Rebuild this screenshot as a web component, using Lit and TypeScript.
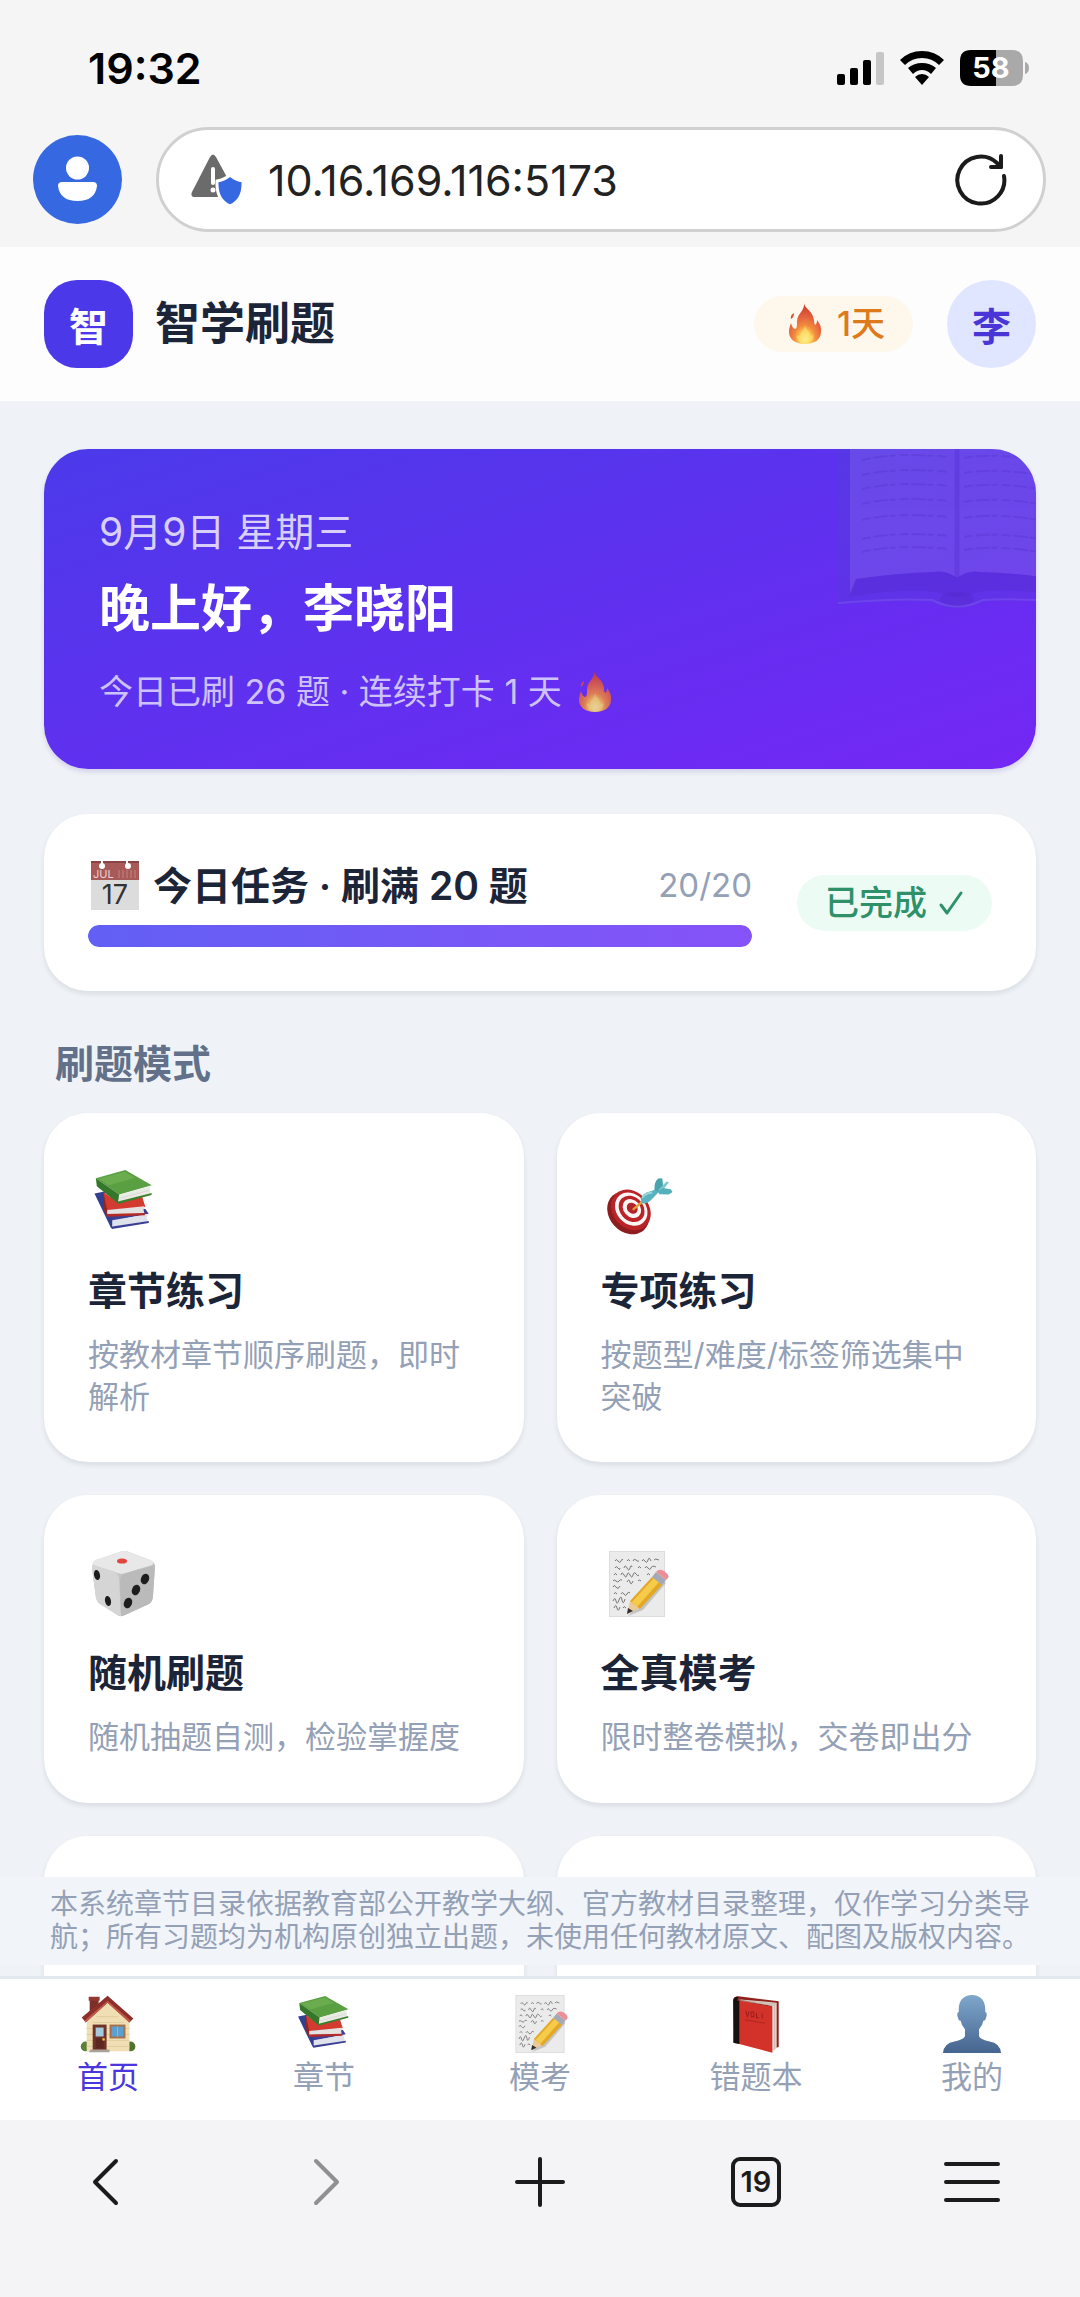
import { LitElement, html, css, svg, TemplateResult } from "lit";
import { customElement, property, state } from "lit/decorators.js";

interface Mode {
  icon: string;
  title: string;
  desc: string;
}

interface Tab {
  id: string;
  icon: string;
  label: string;
}

const books = svg`
  <g transform="translate(-9.6 -19) scale(.335)">
    <path d="M48 130 L78 124 L104 204 L102 236 L97 232 Z" fill="#33408f" />
    <path d="M78 160 L200 176 L210 190 L102 212 Z" fill="#3c3f94" />
    <path d="M101 210 L206 192 Q202 203 207 213 L101 229 Z" fill="#dfe2ea" />
    <path d="M101 228 L210 212 L210 218 L100 236 Z" fill="#3a3f96" />
    <path d="M74 125 L118 156 L190 138 L200 170 L84 180 Z" fill="#d33a30" />
    <path d="M74 125 L86 180 L84 196 L76 178 Z" fill="#96251f" />
    <path d="M86 179 L197 168 Q192 179 197 190 L86 193 Z" fill="#e4e1e1" />
    <path d="M84 191 L198 188 L198 195 L85 199 Z" fill="#b52a26" />
    <path d="M52 84 L140 60 L219 105 L122 133 Z" fill="#5a9f41" />
    <path d="M60 86 L138 65 L170 83 L90 106 Z" fill="#79b95c" opacity=".5" />
    <path d="M52 84 L122 133 L118 160 L55 108 Z" fill="#35772a" />
    <path d="M121 134 L215 108 Q210 119 215 130 L121 156 Z" fill="#e9ebe5" />
    <path d="M122 145 L212 120" stroke="#cfd4ca" stroke-width="2" />
    <path d="M118 154 L219 128 L218 134 L118 161 Z" fill="#3b7f2e" />
  </g>
`;

const target = svg`
  <g transform="translate(-9.4 -18.4) scale(.333)">
    <ellipse cx="110" cy="187" rx="57" ry="70" transform="rotate(-42 110 187)" fill="#8e1d20" />
    <ellipse cx="118" cy="178" rx="54" ry="66" transform="rotate(-42 118 178)" fill="#b92429" />
    <ellipse cx="119" cy="176" rx="44" ry="54" transform="rotate(-42 119 176)" fill="#fbf5f3" />
    <ellipse cx="120" cy="175" rx="35" ry="43" transform="rotate(-42 120 175)" fill="#b92429" />
    <ellipse cx="121" cy="174" rx="25" ry="31" transform="rotate(-42 121 174)" fill="#fbf5f3" />
    <ellipse cx="122" cy="173" rx="15" ry="18" transform="rotate(-42 122 173)" fill="#b3232a" />
    <path d="M126 176 L152 154" stroke="#d9a53a" stroke-width="7" stroke-linecap="round" />
    <path d="M148 148 Q150 126 180 121 L201 112 L204 122 L184 143 Q166 162 152 158 Z" fill="#5bb3bd" />
    <path d="M152 142 Q160 128 182 126" stroke="#9edbe0" stroke-width="5" fill="none" />
    <path d="M189 118 Q187 94 200 84 L212 83 L215 106 L200 122 Z" fill="#49a3ae" />
    <path d="M200 118 L226 92 L232 96 L214 118 Z" fill="#7cc9d0" />
    <path d="M198 122 L214 112 L238 116 L243 124 L232 132 L204 131 Z" fill="#54b0ba" />
  </g>
`;

const dice = svg`
  <g transform="translate(3 0)">
    <path d="M2 12 Q3 9 8 8 L29 1 Q33 -1 38 1 L59 9 Q64 11 64 15 L62 45 Q62 50 58 53 L34 64 Q29 67 25 63 L9 53 Q6 51 5 47 L1 17 Z" fill="#c6c6c6" />
    <path d="M2 12 Q3 9 8 8 L29 1 Q33 -1 38 1 L59 9 Q65 11 61 14 L35 22 Q29 24 24 21 L5 15 Q1 14 2 12 Z" fill="#e8e8e8" />
    <path d="M2 14 L24 21 Q28 24 28 29 L30 65 Q27 65 25 63 L9 53 Q6 51 5 47 L1 17 Z" fill="#d5d5d5" />
    <path d="M64 14 L35 22 Q29 24 29 30 L30 65 Q32 65 34 64 L58 53 Q62 50 62 45 Z" fill="#bababa" />
    <ellipse cx="31" cy="10" rx="5" ry="2.600" fill="#e2453c" />
    <ellipse cx="6" cy="24" rx="3" ry="5" transform="rotate(-12 6 24)" fill="#1d1d1d" />
    <ellipse cx="17" cy="50" rx="3" ry="5" transform="rotate(-12 17 50)" fill="#1d1d1d" />
    <ellipse cx="54" cy="28" rx="4" ry="5.500" transform="rotate(22 54 28)" fill="#1d1d1d" />
    <ellipse cx="45" cy="39" rx="4" ry="5.500" transform="rotate(22 45 39)" fill="#1d1d1d" />
    <ellipse cx="37" cy="52" rx="4" ry="5.500" transform="rotate(22 37 52)" fill="#1d1d1d" />
  </g>
`;

const memo = svg`
  <g transform="translate(7 0)">
    <rect x="1" y="0" width="56" height="66" fill="#dcdcdc" />
    <rect x="2" y="1" width="54" height="64" fill="#ebebeb" />
    <g fill="none" stroke="#6a6a6a" stroke-width=".9">
      <path d="M7 10 q1 -3 3 0 t3 0 t2 -1 M19 10 q1 -3 3 0 M25 10 q1 -3 3 -1 t3 1 M34 10 q1 -3 3 0 t3 -1 t3 1 M46 9 q1 -2 5 0" />
      <path d="M7 17 q1 -3 3 0 t2 0 M16 17 q1 -4 3 0 t3 0 t2 -1 M30 17 q1 -3 3 0 M37 17 q1 -3 3 0 t3 0 t5 -1" />
      <path d="M6 24 q1 -3 3 0 M13 24 q1 -4 3 0 t3 0 t3 0 t3 0 t3 -1 t3 1 M39 24 q1 -3 3 0" />
      <path d="M5 30 q1 -2 3 0 t3 0 t3 -1 M19 31 q2 -4 3 0 t3 -1 M30 30 q1 -2 3 0" />
      <path d="M5 36 q1 -3 3 0 t4 -1" />
      <path d="M6 43 q1 -3 3 0 M13 43 q1 -3 3 0 t3 0 t3 -1" />
      <path d="M5 50 q2 -5 3 0 t3 -1 t3 0 t3 -1" />
      <path d="M6 57 q2 -5 3 0 t3 -1 M15 57 q1 -3 3 0" />
    </g>
    <path d="M20 65 L35 59 L58 32 L54 28 Z" fill="#8a8a8a" opacity=".4" />
    <path d="M19 63 L22 50 L32 57 Z" fill="#ecc998" />
    <path d="M19 63 L20 57 L25 60 Z" fill="#33302e" />
    <path d="M22 50 L44 26 L54 34 L32 58 Z" fill="#e3a827" />
    <path d="M24 51 L46 27 L51 31 L29 56 Z" fill="#f6cb4a" />
    <path d="M44 26 L48 21 L58 29 L54 34 Z" fill="#a4a9b5" />
    <path d="M48 21 Q51 17 56 20 Q62 24 60 27 L58 29 Z" fill="#eb9097" />
  </g>
`;

const house = svg`
  <g transform="translate(5 2) scale(1.13)">
    <path d="M9 1 H18 V14 L9 20 Z" fill="#7c3029" />
    <path d="M8 0 H19 V4 H8 Z" fill="#93382f" />
    <ellipse cx="5" cy="50" rx="5" ry="5" fill="#5b7f36" />
    <ellipse cx="50" cy="50" rx="5" ry="5" fill="#4f7430" />
    <path d="M6 24 L27 4 L49 24 V55 H6 Z" fill="#f0dfb4" />
    <path d="M6 32 H49 M6 38 H49 M6 44 H49 M6 50 H49 M16 20 H38 M12 26 H43" stroke="#e2cd9d" stroke-width="1" />
    <path d="M27 -1 L53 22 L49 26 L27 6 L5 26 L1 21 Z" fill="#8d2f2b" />
    <path d="M27 4 L50 24 L49 26 L27 6 L5 26 L4 24 Z" fill="#c25a4c" />
    <rect x="12" y="28" width="14" height="26" fill="#70332a" />
    <rect x="15" y="31" width="8" height="9" fill="#a5c9dd" />
    <rect x="15" y="42" width="8" height="10" fill="#5d271f" />
    <circle cx="23" cy="43" r="1.4" fill="#e5b444" />
    <rect x="29" y="28" width="16" height="14" fill="#a5704b" />
    <rect x="31" y="30" width="12" height="10" fill="#5ba0cf" />
    <path d="M37 30 V40" stroke="#82bce0" stroke-width="1" />
    <path d="M10 53 H29 V56 H8 Z" fill="#a9a298" />
  </g>
`;

const redBook = svg`
  <g transform="translate(-50 -16.6) scale(.383)">
    <path d="M157 58 Q158 47 172 47 L292 62 V198 L276 202 L160 186 Z" fill="#8f211d" />
    <path d="M170 56 L286 66 V200 L272 213 V76 Z" fill="#e3d7cc" />
    <path d="M176 59 L284 70 M180 62 L278 74" stroke="#b9aaa0" stroke-width="2" />
    <path d="M280 72 V206" stroke="#bcaea4" stroke-width="2" />
    <path d="M172 60 L273 78 V215 L172 188 Z" fill="#d3322a" />
    <path d="M157 58 Q160 48 172 49 L168 60 L175 61 V189 L157 185 Z" fill="#17110f" />
    <path d="M194 90 l5 18 l5 -16 M210 94 h8 v14 h-8 Z M226 96 v15 h7 M243 98 v15" stroke="#9b1f1b" stroke-width="3" fill="none" />
    <path d="M191 117 L251 127" stroke="#9b1f1b" stroke-width="2" />
  </g>
`;

const bust = svg`
  <defs>
    <linearGradient id="bust" x1="0" y1="0" x2="0" y2="1">
      <stop offset="0" stop-color="#7fa7cb" />
      <stop offset="1" stop-color="#45648f" />
    </linearGradient>
  </defs>
  <path
    d="M36 0 C46 0 52 7 51 19 Q54 20 52 26 Q51 30 49 29 Q48 35 44 39 V47 Q46 51 56 53 Q68 55 69 66 H3 Q4 55 16 53 Q26 51 28 47 V39 Q24 35 23 29 Q21 30 20 26 Q18 20 21 19 C20 7 26 0 36 0 Z"
    fill="url(#bust)"
  />
`;

const pictures: Record<string, TemplateResult> = {
  books,
  target,
  dice,
  memo,
  house,
  redBook,
  bust,
};

const picture = (name: string) => html`
  <svg class="picture" viewBox="0 0 72 66" aria-hidden="true">
    ${pictures[name]}
  </svg>
`;

const flame = html`
  <svg class="flame" viewBox="0 0 34 42" aria-hidden="true">
    <defs>
      <radialGradient id="flame" cx=".5" cy=".88" r=".8">
        <stop offset="0" stop-color="#fff6a6" />
        <stop offset=".2" stop-color="#fdd558" />
        <stop offset=".42" stop-color="#f28c3c" />
        <stop offset=".7" stop-color="#e2603f" />
        <stop offset="1" stop-color="#cf4030" />
      </radialGradient>
    </defs>
    <path
      d="M16 0 C16 5 25 8 26 17 Q26 20 27 22 Q29 21 29 17 Q34 23 33 29 C33 36 27 41 17 41 C7 41 1 36 1 29 C1 25 2 23 3 20 Q4 25 7 26 C9 26 9 22 9 19 C9 10 17 8 16 0 Z"
      fill="url(#flame)"
    />
    <path d="M3 16 Q2 12 6 10 Q6 14 3 16 Z" fill="#d8502f" />
    <path
      d="M17 21 C17 26 22 28 23 33 Q25 33 25 31 C27 37 22 40 17 40 C12 40 8 37 9 32 Q10 33 12 33 C13 28 17 27 17 21 Z"
      fill="#ffe676"
      opacity=".5"
    />
  </svg>
`;

const calendar = html`
  <svg class="calendar" viewBox="0 0 48 49" aria-hidden="true">
    <rect width="48" height="49" fill="#dcdcdc" />
    <rect width="48" height="19" fill="#a85a59" />
    <path d="M0 1 H48" stroke="#8a4445" stroke-width="2" />
    <circle cx="11" cy="5" r="3" fill="#fff" />
    <circle cx="37" cy="5" r="3" fill="#fff" />
    <path d="M11 0 V4 M36 0 V4" stroke="#fff" stroke-width="2" />
    <path d="M28 9 V17 M32 9 V17 M36 9 V17 M40 9 V17 M44 9 V17" stroke="#c48382" stroke-width="1" />
    <text x="2" y="17" font-size="11" fill="#ecd0cf">JUL</text>
    <text x="24" y="43" font-size="27" text-anchor="middle" fill="#333">17</text>
  </svg>
`;

const openBook = html`
  <svg class="open-book" viewBox="0 0 236 160" aria-hidden="true">
    <path d="M0 0 H236 V154 Q180 150 145 153 Q119 166 94 153 Q60 150 0 156 Z" fill="#4a4ac8" opacity=".22" />
    <path d="M0 154 Q60 149 94 151 Q119 164 145 151 Q180 149 236 153" fill="none" stroke="#a88cff" stroke-width="2" opacity=".2" />
    <path d="M12 0 H119 V129 Q108 121 96 123 Q60 124 18 130 L12 146 Z" fill="#cdbcff" opacity=".14" />
    <path d="M226 0 H119 V129 Q130 121 142 123 Q178 124 220 130 L226 146 Z" fill="#cdbcff" opacity=".14" />
    <path d="M18 130 Q60 124 96 123 Q108 121 119 129 Q130 121 142 123 Q178 124 220 130 L228 146 Q170 139 140 143 Q119 152 98 143 Q60 139 10 148 Z" fill="#4a22b8" opacity=".18" />
    <path d="M119 0 V129" stroke="#4a22c8" stroke-width="5" opacity=".25" />
    <ellipse cx="119" cy="150" rx="17" ry="7" fill="#4a22b8" opacity=".25" />
    <g fill="none" stroke="#4620b8" stroke-width="2" stroke-dasharray="9 3 14 2 6 4" opacity=".2">
      ${[9, 24, 38, 53, 69, 88, 101].map(
        (y) => svg`
          <path d="M24 ${y + 2} Q60 ${y - 6} 110 ${y - 1}" />
          <path d="M126 ${y} Q160 ${y - 6} 214 ${y + 4}" />
        `
      )}
    </g>
  </svg>
`;

@customElement("study-mode-card")
export class StudyModeCard extends LitElement {
  @property({ type: Object }) mode?: Mode;

  static styles = css`
    :host {
      display: grid;
    }
    button {
      display: flex;
      flex-direction: column;
      min-height: 308px;
      padding: 44px;
      border: 0;
      border-radius: 44px;
      background: #fff;
      box-shadow: 0 3px 5px rgba(30, 41, 59, 0.1);
      font: inherit;
      text-align: left;
    }
    .picture {
      width: 72px;
      height: 66px;
      margin: 12px 0 28px;
    }
    .title {
      color: #1c2537;
      font-size: 39px;
      font-weight: 600;
      line-height: 55px;
    }
    .desc {
      margin-top: 16px;
      color: #94a0b5;
      font-size: 31px;
      line-height: 42px;
    }
  `;

  render() {
    if (!this.mode) return html`<button aria-label="更多"></button>`;
    return html`
      <button>
        ${picture(this.mode.icon)}
        <span class="title">${this.mode.title}</span>
        <span class="desc">${this.mode.desc}</span>
      </button>
    `;
  }
}

@customElement("app-root")
export class AppRoot extends LitElement {
  @state() private activeTab = "home";
  @state() private done = 20;

  private goal = 20;

  private modes: Mode[] = [
    { icon: "books", title: "章节练习", desc: "按教材章节顺序刷题，即时解析" },
    { icon: "target", title: "专项练习", desc: "按题型/难度/标签筛选集中突破" },
    { icon: "dice", title: "随机刷题", desc: "随机抽题自测，检验掌握度" },
    { icon: "memo", title: "全真模考", desc: "限时整卷模拟，交卷即出分" },
  ];

  private tabs: Tab[] = [
    { id: "home", icon: "house", label: "首页" },
    { id: "chapter", icon: "books", label: "章节" },
    { id: "exam", icon: "memo", label: "模考" },
    { id: "wrong", icon: "redBook", label: "错题本" },
    { id: "mine", icon: "bust", label: "我的" },
  ];

  static styles = css`
    * {
      box-sizing: border-box;
    }
    :host {
      display: flex;
      flex-direction: column;
      height: 100vh;
      background: #eff3f7;
      color: #1c2537;
      font-family: Inter, "Noto Sans CJK SC", sans-serif;
    }
    button {
      padding: 0;
      border: 0;
      background: none;
      color: inherit;
      font: inherit;
    }
    h1,
    h2,
    p {
      margin: 0;
    }

    /* phone status bar */
    .status {
      display: flex;
      align-items: center;
      justify-content: space-between;
      padding: 40px 51px 0 88px;
      background: #f5f5f5;
      color: #000;
      font-size: 43px;
      font-weight: 600;
      line-height: 56px;
    }
    .signals {
      display: flex;
      align-items: center;
      gap: 16px;
    }
    .bars {
      width: 47px;
      height: 33px;
    }
    .wifi {
      width: 44px;
      height: 34px;
    }
    .battery {
      width: 69px;
      height: 36px;
    }

    /* browser address row */
    .browser {
      display: flex;
      align-items: center;
      gap: 34px;
      padding: 31px 34px 15px 33px;
      background: #f5f5f5;
    }
    .profile {
      flex: none;
      width: 89px;
      height: 89px;
    }
    .profile svg,
    .reload svg,
    .toolbar svg {
      display: block;
      width: 100%;
      height: 100%;
    }
    .address {
      flex: 1;
      display: flex;
      align-items: center;
      gap: 25px;
      min-width: 0;
      height: 105px;
      padding: 0 34px 0 32px;
      border: 3px solid #d0d0d0;
      border-radius: 53px;
      background: #fff;
    }
    .warning {
      flex: none;
      width: 52px;
      height: 52px;
    }
    .address input {
      flex: 1;
      min-width: 0;
      padding: 0;
      border: 0;
      outline: 0;
      background: none;
      color: #222;
      font: inherit;
      font-size: 43px;
    }
    .reload {
      flex: none;
      width: 56px;
      height: 56px;
    }

    /* app header */
    header {
      display: flex;
      align-items: center;
      padding: 33px 44px;
      background: #fdfdfe;
    }
    .logo,
    .avatar {
      display: grid;
      place-items: center;
      width: 89px;
      height: 88px;
      font-size: 39px;
      font-weight: 600;
    }
    .logo {
      border-radius: 33px;
      background: #4b39e9;
      color: #fff;
    }
    header h1 {
      flex: 1;
      margin-left: 22px;
      font-size: 45px;
      font-weight: 600;
      line-height: 66px;
    }
    .streak,
    .finished {
      display: flex;
      align-items: center;
      border-radius: 28px;
      font-size: 34px;
      font-weight: 500;
      line-height: 56px;
    }
    .streak {
      gap: 15px;
      margin-right: 34px;
      padding: 0 28px 0 34px;
      background: #fef7ec;
      color: #dc7a1c;
    }
    .flame {
      width: 34px;
      height: 42px;
    }
    .avatar {
      border-radius: 50%;
      background: #e0e6ff;
      color: #4a35d6;
    }

    /* scrolling content with the notice laid over it */
    .viewport {
      position: relative;
      flex: 1;
      min-height: 0;
    }
    main {
      height: 100%;
      padding: 48px 44px;
      overflow: auto;
      scrollbar-width: none;
    }
    .hero {
      position: relative;
      overflow: hidden;
      padding: 55px;
      border-radius: 44px;
      background: linear-gradient(to bottom right, #4b3aea, #7427f4);
      box-shadow: 0 3px 5px rgba(60, 30, 160, 0.15);
      color: #fff;
    }
    .hero .date {
      color: #d8d0fb;
      font-size: 39px;
      line-height: 55px;
    }
    .hero h2 {
      margin: 11px 0 23px;
      font-size: 51px;
      font-weight: 600;
      line-height: 77px;
    }
    .hero .summary {
      display: flex;
      align-items: center;
      gap: 16px;
      color: #cec2fa;
      font-size: 34px;
      line-height: 44px;
    }
    .hero .flame {
      opacity: 0.85;
    }
    .open-book {
      position: absolute;
      top: 0;
      right: -38px;
      width: 236px;
      height: 160px;
    }

    .task {
      display: flex;
      align-items: center;
      gap: 45px;
      margin-top: 45px;
      padding: 44px;
      border-radius: 44px;
      background: #fff;
      box-shadow: 0 3px 5px rgba(30, 41, 59, 0.1);
    }
    .task-body {
      flex: 1;
    }
    .task-line {
      display: flex;
      align-items: center;
      line-height: 55px;
    }
    .calendar {
      width: 48px;
      height: 49px;
      margin: 0 14px 0 3px;
      overflow: visible;
    }
    .task h2 {
      flex: 1;
      font-size: 39px;
      font-weight: 600;
    }
    .count {
      color: #94a0b5;
      font-size: 33px;
    }
    .track {
      height: 22px;
      margin-top: 12px;
      overflow: hidden;
      border-radius: 11px;
      background: #eef1f6;
    }
    .fill {
      height: 100%;
      border-radius: 11px;
      background: linear-gradient(90deg, #625ff5, #8653f8);
    }
    .finished {
      gap: 11px;
      padding: 0 28px;
      background: #ecfcf5;
      color: #2f9169;
    }
    .finished svg {
      width: 26px;
      height: 26px;
    }

    .section {
      margin: 45px 11px 22px;
      color: #62708a;
      font-size: 39px;
      font-weight: 600;
      line-height: 55px;
    }
    .modes {
      display: grid;
      grid-template-columns: 1fr 1fr;
      gap: 33px;
    }
    .notice {
      position: absolute;
      right: 0;
      bottom: 11px;
      left: 0;
      padding: 11px 44px;
      background: #f1f4f9;
      color: #94a0b5;
      font-size: 28px;
      line-height: 33px;
      text-align: center;
    }

    .tabs {
      display: grid;
      grid-template-columns: repeat(5, 1fr);
      padding: 16px 0 22px;
      border-top: 3px solid #e3e7ee;
      background: #fff;
    }
    .tabs a {
      display: flex;
      flex-direction: column;
      align-items: center;
      gap: 3px;
      color: #94a0b5;
      font-size: 31px;
      line-height: 42px;
      text-decoration: none;
    }
    .tabs a[aria-current="page"] {
      color: #4b35dc;
    }
    .tabs .picture {
      width: 64px;
      height: 58px;
    }

    .toolbar {
      display: grid;
      grid-template-columns: repeat(5, 1fr);
      justify-items: center;
      padding: 32px 0 85px;
      background: #f4f4f6;
      color: #1b1b1b;
    }
    .toolbar button {
      width: 60px;
      height: 60px;
    }
    .toolbar button:disabled {
      color: #909090;
    }
  `;

  render() {
    return html`
      ${this.renderStatus()} ${this.renderBrowser()}
      <header>
        <span class="logo">智</span>
        <h1>智学刷题</h1>
        <span class="streak">${flame}1天</span>
        <button class="avatar">李</button>
      </header>
      <div class="viewport">
        <main>
          <section class="hero">
            ${openBook}
            <p class="date">9月9日 星期三</p>
            <h2>晚上好，李晓阳</h2>
            <p class="summary">今日已刷 26 题 · 连续打卡 1 天 ${flame}</p>
          </section>
          ${this.renderTask()}
          <h2 class="section">刷题模式</h2>
          <div class="modes">
            ${this.modes.map(
              (mode) => html`<study-mode-card .mode="${mode}"></study-mode-card>`
            )}
            <study-mode-card></study-mode-card>
            <study-mode-card></study-mode-card>
          </div>
        </main>
        <p class="notice">
          本系统章节目录依据教育部公开教学大纲、官方教材目录整理，仅作学习分类导航；所有习题均为机构原创独立出题，未使用任何教材原文、配图及版权内容。
        </p>
      </div>
      <nav class="tabs">
        ${this.tabs.map(
          (tab) => html`
            <a
              href="#${tab.id}"
              aria-current="${tab.id === this.activeTab ? "page" : "false"}"
              @click="${() => this.selectTab(tab.id)}"
            >
              ${picture(tab.icon)}<span>${tab.label}</span>
            </a>
          `
        )}
      </nav>
      ${this.renderToolbar()}
    `;
  }

  private selectTab(id: string) {
    this.activeTab = id;
  }

  private renderStatus() {
    return html`
      <div class="status">
        <span>19:32</span>
        <div class="signals">
          <svg class="bars" viewBox="0 0 47 33">
            <rect x="0" y="22" width="8" height="11" rx="2" />
            <rect x="13" y="16" width="8" height="17" rx="2" />
            <rect x="26" y="8" width="8" height="25" rx="2" />
            <rect x="39" y="0" width="8" height="33" rx="2" fill="#c6c6c6" />
          </svg>
          <svg class="wifi" viewBox="0 0 44 34">
            <path d="M22 0 Q35 0 44 9 L39 14 Q32 7 22 7 Q12 7 5 14 L0 9 Q9 0 22 0 Z" />
            <path d="M22 12 Q30 12 36 17 L31 23 Q27 19 22 19 Q17 19 13 23 L8 17 Q14 12 22 12 Z" />
            <path d="M22 23 Q26 23 29 26 L22 34 L15 26 Q18 23 22 23 Z" />
          </svg>
          <svg class="battery" viewBox="0 0 69 36">
            <path d="M11 0 H36 V36 H11 Q0 36 0 25 V11 Q0 0 11 0 Z" />
            <path d="M36 0 H52 Q63 0 63 11 V25 Q63 36 52 36 H36 Z" fill="#a9a9a9" />
            <path d="M65 12 Q69 13 69 18 Q69 23 65 24 Z" fill="#a9a9a9" />
            <text x="31" y="28" font-size="29" font-weight="700" text-anchor="middle" fill="#fff">58</text>
          </svg>
        </div>
      </div>
    `;
  }

  private renderBrowser() {
    return html`
      <div class="browser">
        <button class="profile" aria-label="账户">
          <svg viewBox="0 0 89 89">
            <circle cx="44.5" cy="44.5" r="44.5" fill="#3668e2" />
            <circle cx="44.5" cy="33" r="11.5" fill="#fff" />
            <path d="M29 47 H60 Q64 47 64 51 Q62 66 44.5 66 Q27 66 25 51 Q25 47 29 47 Z" fill="#fff" />
          </svg>
        </button>
        <div class="address">
          <svg class="warning" viewBox="0 0 52 52">
            <path d="M19 3 Q22 -2 25 3 L44 38 Q46 43 41 43 H4 Q-1 43 1 38 Z" fill="#6b6b6b" />
            <path d="M22 15 V29" stroke="#fff" stroke-width="4" stroke-linecap="round" />
            <circle cx="22" cy="36" r="2.5" fill="#fff" />
            <path d="M39 21 Q45 26 52 27 Q53 46 39 52 Q25 46 26 27 Q33 26 39 21 Z" fill="#3668e2" stroke="#fff" stroke-width="3" />
          </svg>
          <input aria-label="网址" value="10.16.169.116:5173" />
          <button class="reload" aria-label="刷新">
            <svg viewBox="0 0 56 56" fill="none" stroke="#1b1b1b" stroke-width="4" stroke-linecap="round" stroke-linejoin="round">
              <path d="M51 24 A23.500 23.500 0 1 1 44 11 L48 15" />
              <path d="M48 4 V15 H38" />
            </svg>
          </button>
        </div>
      </div>
    `;
  }

  private renderTask() {
    const percent = Math.min(100, (this.done / this.goal) * 100);
    return html`
      <section class="task">
        <div class="task-body">
          <div class="task-line">
            ${calendar}
            <h2>今日任务 · 刷满 ${this.goal} 题</h2>
            <span class="count">${this.done}/${this.goal}</span>
          </div>
          <div class="track" role="progressbar" aria-valuenow="${percent}">
            <div class="fill" style="width: ${percent}%"></div>
          </div>
        </div>
        <span class="finished">
          已完成
          <svg viewBox="0 0 26 26" fill="none" stroke="currentColor" stroke-width="3" stroke-linecap="round" stroke-linejoin="round">
            <path d="M3 15 L9 23 L23 3" />
          </svg>
        </span>
      </section>
    `;
  }

  private renderToolbar() {
    return html`
      <nav class="toolbar">
        <button aria-label="后退">
          <svg viewBox="0 0 60 60" fill="none" stroke="currentColor" stroke-width="4" stroke-linecap="round" stroke-linejoin="round">
            <path d="M38 9 L17 30 L38 51" />
          </svg>
        </button>
        <button aria-label="前进" disabled>
          <svg viewBox="0 0 60 60" fill="none" stroke="currentColor" stroke-width="4" stroke-linecap="round" stroke-linejoin="round">
            <path d="M22 9 L43 30 L22 51" />
          </svg>
        </button>
        <button aria-label="新建标签页">
          <svg viewBox="0 0 60 60" stroke="currentColor" stroke-width="4" stroke-linecap="round">
            <path d="M30 7 V53 M7 30 H53" />
          </svg>
        </button>
        <button aria-label="标签页">
          <svg viewBox="0 0 60 60">
            <rect x="7" y="7" width="46" height="46" rx="7" fill="none" stroke="currentColor" stroke-width="4" />
            <text x="30" y="40" font-size="29" font-weight="600" text-anchor="middle" fill="currentColor">19</text>
          </svg>
        </button>
        <button aria-label="菜单">
          <svg viewBox="0 0 60 60" stroke="currentColor" stroke-width="4" stroke-linecap="round">
            <path d="M4 12 H56 M4 30 H56 M4 48 H56" />
          </svg>
        </button>
      </nav>
    `;
  }
}
